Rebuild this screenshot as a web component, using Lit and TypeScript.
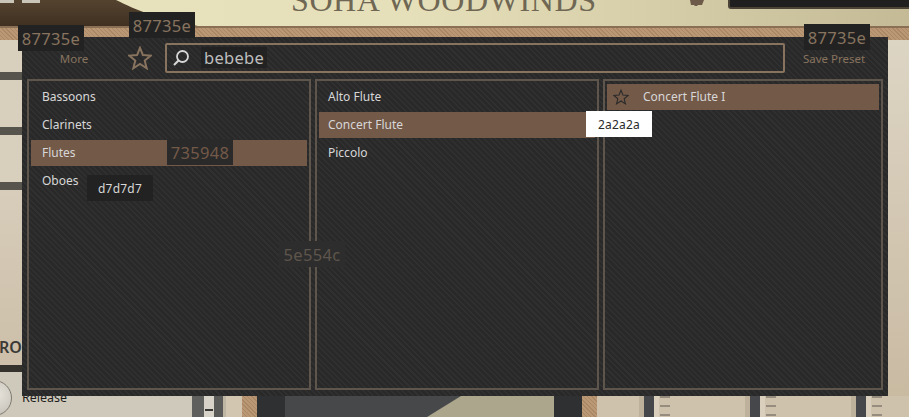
import { LitElement, html, css, svg } from 'lit';
import { customElement } from 'lit/decorators.js';

const star = (size: number, color: string, width: number) => html`
  <svg width=${size} height=${size} viewBox="0 0 24 24" fill="none">
    ${svg`<path d="M12 1.8 14.9 9.1 22.8 9.6 16.7 14.6 18.7 22.3 12 18 5.3 22.3 7.3 14.6 1.2 9.6 9.1 9.1Z"
      stroke=${color} stroke-width=${width} stroke-linejoin="miter" />`}
  </svg>
`;

@customElement('preset-column')
class PresetColumn extends LitElement {
  static properties = {
    items: { type: Array },
    selected: { type: String },
    starred: { type: Boolean },
  };

  items: string[] = [];
  selected = '';
  starred = false;

  static styles = css`
    :host {
      display: block;
      box-sizing: border-box;
      border: 2px solid #5e554c;
      padding: 3px 2px;
    }
    .row {
      height: 26px;
      box-sizing: border-box;
      margin-bottom: 2px;
      padding-bottom: 2px;
      display: flex;
      align-items: center;
      padding-left: var(--row-pad, 11px);
      color: #d7d7d7;
      font-size: 12px;
    }
    .row.on {
      background: #735948;
    }
    .row.fav {
      padding-left: 6px;
      padding-bottom: 1px;
    }
    .row svg {
      margin-right: 14px;
    }
  `;

  render() {
    return this.items.map(
      (name) => html`
        <div class="row ${name === this.selected ? 'on' : ''} ${this.starred ? 'fav' : ''}">
          ${this.starred ? star(16, '#2a2a2a', 1.6) : ''}${name}
        </div>
      `,
    );
  }
}

@customElement('app-root')
class AppRoot extends LitElement {
  static styles = css`
    :host {
      display: block;
      width: 909px;
      height: 417px;
      overflow: hidden;
      font-family: 'Noto Sans', sans-serif;
    }
    .stage {
      position: relative;
      width: 909px;
      height: 417px;
      overflow: hidden;
      display: flex;
      flex-direction: column;
      background: #d2c6b1;
    }

    /* plugin behind the dialog */
    .title-bar {
      position: relative;
      height: 26px;
      flex: none;
      background: linear-gradient(90deg, #e8e2bd 0%, #e6e0ba 45%, #c4bb96 100%);
      border-bottom: 2px solid #8a6f55;
      overflow: hidden;
    }
    .title-bar svg {
      position: absolute;
      left: 0;
      top: 0;
    }
    .title {
      position: absolute;
      left: 291px;
      top: -18px;
      font-family: 'Liberation Serif', serif;
      font-size: 32px;
      line-height: 36px;
      color: #6f6753;
      white-space: nowrap;
      letter-spacing: 0.6px;
    }
    .display {
      position: absolute;
      left: 728px;
      top: -4px;
      width: 190px;
      height: 9px;
      background: #1f1f1f;
      border: 2px solid #4a4336;
      border-radius: 3px;
    }
    .hatch {
      background-color: #b4906d;
      background-image: repeating-linear-gradient(45deg, #aa8765 0 1px, #ba9775 1px 3px);
    }
    .hatch-band {
      height: 12px;
      flex: none;
    }
    .middle {
      flex: 1;
      display: flex;
      justify-content: space-between;
    }
    .left-strip {
      width: 24px;
      display: flex;
      flex-direction: column;
    }
    .slot {
      height: 47px;
      flex: none;
      background: #d9cfbd;
      border-bottom: 8px solid #57544e;
    }
    .slot.first {
      height: 32px;
    }
    .slot.last {
      flex: 1;
      border-bottom: 7px solid #35322e;
      font-size: 16px;
      font-weight: 600;
      color: #3b3a36;
      display: flex;
      align-items: flex-end;
      padding-bottom: 7px;
      background: linear-gradient(#d7cdba, #cdbfa9);
    }
    .slot span {
      margin-left: -1px;
    }
    .release-bg {
      height: 24px;
      flex: none;
      background: #cfc9bb;
    }
    .right-strip {
      width: 21px;
      background: linear-gradient(#ddd5c4, #c9baa2);
    }
    .bottom {
      height: 21px;
      flex: none;
      display: flex;
    }
    .bottom > div {
      flex: none;
    }
    .knob {
      position: absolute;
      left: -24px;
      top: 380px;
      width: 36px;
      height: 36px;
      box-sizing: border-box;
      border-radius: 50%;
      background: radial-gradient(circle at 60% 40%, #e6e3dc, #bcb7ac);
      border: 1px solid #7e7a70;
    }
    .release {
      position: absolute;
      left: 22px;
      top: 389px;
      font-size: 12.5px;
      color: #1c1c1c;
    }
    .panel-a { width: 192px; background: #cfc9bb; }
    .panel-b { width: 12px; background: #5f5f5d; }
    .panel-c {
      width: 10px;
      background: #d7d3c8;
      display: flex;
      justify-content: center;
      padding-top: 13px;
      box-sizing: border-box;
    }
    .panel-c i {
      width: 8px;
      height: 2px;
      background: #3a3836;
    }
    .panel-d { width: 9px; background: #5a5a58; }
    .panel-e { width: 3px; background: #bfb5a3; }
    .panel-f { width: 16px; background: #d3c6b0; }
    .panel-h { width: 28px; background: #2f3032; }
    .hatch.side { width: 15px; }
    .screen {
      width: 269px;
      background: #47484a;
    }
    .screen svg {
      display: block;
    }
    .fader-zone {
      width: 312px;
      display: flex;
      background: #cfc2ac;
      padding-left: 47px;
      box-sizing: border-box;
      gap: 96px;
    }
    .fader {
      position: relative;
      width: 10px;
      background: #45474a;
      box-shadow: -5px 0 0 #bdb19c, 5px 0 0 #d9cfbc;
    }
    .fader::after {
      content: '';
      position: absolute;
      left: 16px;
      top: 0;
      width: 10px;
      height: 2px;
      background: #978d7e;
      box-shadow: 0 9px 0 #978d7e, 0 18px 0 #978d7e;
    }

    /* dialog */
    .dialog {
      position: absolute;
      left: 22px;
      top: 37px;
      width: 866px;
      height: 359px;
      box-sizing: border-box;
      padding: 6px 5px;
      display: flex;
      flex-direction: column;
      gap: 6px;
      background-color: #2b2b2b;
      background-image: repeating-linear-gradient(45deg, #303030 0 1.5px, #292929 1.5px 4px);
    }
    .head {
      height: 30px;
      display: flex;
      align-items: center;
      flex: none;
    }
    .action {
      text-align: center;
      color: #87735e;
      font-size: 11.5px;
    }
    .action.more {
      width: 94px;
    }
    .action.save {
      width: 98px;
      white-space: nowrap;
    }
    .fav {
      width: 24px;
      height: 24px;
      margin: 0 13px 0 7px;
      flex: none;
    }
    .search {
      width: 620px;
      height: 30px;
      box-sizing: border-box;
      border: 2px solid #87735e;
      border-radius: 2px;
      display: flex;
      align-items: center;
      padding-left: 5px;
    }
    .search svg {
      flex: none;
    }
    .search .query {
      margin: 0 0 2px 11px;
      background: #222;
      color: #bebebe;
      font-size: 16.5px;
      line-height: 21px;
      padding: 0 3px;
      letter-spacing: 0.3px;
    }
    .columns {
      flex: 1;
      display: grid;
      grid-template-columns: 284px 284px 280px;
      gap: 4px;
      min-height: 0;
    }
    .columns preset-column:nth-child(2) {
      --row-pad: 9px;
    }

    /* colour swatch labels that lie over the dialog */
    .tag {
      position: absolute;
      width: 66px;
      height: 26px;
      display: flex;
      align-items: center;
      justify-content: center;
      background: #222;
      color: #87735e;
      font-size: 16.5px;
      letter-spacing: 0.3px;
    }
    .tag.small {
      font-size: 12px;
      letter-spacing: 0.2px;
    }
    .tag.a { left: 18px; top: 25px; }
    .tag.b { left: 129px; top: 12px; }
    .tag.c { left: 804px; top: 24px; }
    .tag.d { left: 167px; top: 139px; background: #2a2a2a; color: #735948; }
    .tag.e { left: 279px; top: 241px; background: #2d2d2d; color: #5e554c; }
    .tag.f { left: 87px; top: 175px; color: #d7d7d7; }
    .tag.g { left: 586px; top: 111px; background: #fff; color: #2a2a2a; }
  `;

  render() {
    return html`
      <div class="stage">
        <div class="title-bar">
          <svg width="909" height="26" viewBox="0 0 909 26">
            <defs>
              <linearGradient id="brown" x1="0" y1="0" x2="0" y2="1">
                <stop offset="0" stop-color="#54432f" />
                <stop offset="1" stop-color="#3f3021" />
              </linearGradient>
            </defs>
            <path d="M0 0H116C136 10 160 20 198 26H0Z" fill="url(#brown)" />
            <path d="M0 0H14V3H0ZM22 0H40V3H22Z" fill="#c9c5b8" />
            <path d="M690 0H704L702 5H698L697 6L695 6L694 5H691Z" fill="#6e5a48" />
          </svg>
          <div class="title">SOHA WOODWINDS</div>
          <div class="display"></div>
        </div>
        <div class="hatch hatch-band"></div>
        <div class="middle">
          <div class="left-strip">
            <div class="slot first"></div>
            <div class="slot"></div>
            <div class="slot"></div>
            <div class="slot last"><span>RO</span></div>
            <div class="release-bg"></div>
          </div>
          <div class="right-strip"></div>
        </div>
        <div class="bottom">
          <div class="panel-a"></div>
          <div class="panel-b"></div>
          <div class="panel-c"><i></i></div>
          <div class="panel-d"></div>
          <div class="panel-e"></div>
          <div class="panel-f"></div>
          <div class="hatch side"></div>
          <div class="panel-h"></div>
          <div class="screen">
            <svg width="269" height="21" viewBox="0 0 269 21">
              <path d="M176 0H269V21H142Z" fill="#aca68c" />
            </svg>
          </div>
          <div class="panel-h"></div>
          <div class="hatch side"></div>
          <div class="fader-zone">
            <div class="fader"></div>
            <div class="fader"></div>
            <div class="fader"></div>
          </div>
        </div>

        <div class="knob"></div>
        <div class="release">Release</div>

        <div class="dialog">
          <div class="head">
            <div class="action more">More</div>
            <div class="fav">${star(24, '#87735e', 2)}</div>
            <div class="search">
              <svg width="18" height="18" viewBox="0 0 18 18" fill="none">
                <circle cx="10.5" cy="7.5" r="5.5" stroke="#d7d7d7" stroke-width="1.8" />
                <path d="M6.5 11.5 2 16" stroke="#d7d7d7" stroke-width="2.2" />
              </svg>
              <div class="query">bebebe</div>
            </div>
            <div class="action save">Save Preset</div>
          </div>
          <div class="columns">
            <preset-column
              .items=${['Bassoons', 'Clarinets', 'Flutes', 'Oboes']}
              selected="Flutes"
            ></preset-column>
            <preset-column
              .items=${['Alto Flute', 'Concert Flute', 'Piccolo']}
              selected="Concert Flute"
            ></preset-column>
            <preset-column
              .items=${['Concert Flute I']}
              selected="Concert Flute I"
              .starred=${true}
            ></preset-column>
          </div>
        </div>

        <div class="tag a">87735e</div>
        <div class="tag b">87735e</div>
        <div class="tag c">87735e</div>
        <div class="tag d">735948</div>
        <div class="tag e">5e554c</div>
        <div class="tag small f">d7d7d7</div>
        <div class="tag small g">2a2a2a</div>
      </div>
    `;
  }
}
